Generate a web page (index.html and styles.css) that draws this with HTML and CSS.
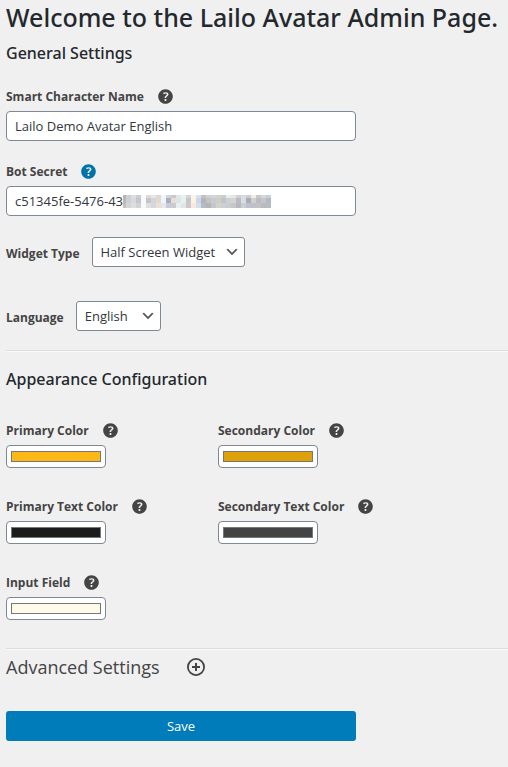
FILE: index.html
```html
<!DOCTYPE html>
<html lang="en">
<head>
<meta charset="utf-8">
<meta name="viewport" content="width=device-width, initial-scale=1">
<title>Lailo Avatar Admin</title>
<link rel="stylesheet" href="styles.css">
</head>
<body>
<svg class="sprite" aria-hidden="true">
  <symbol id="help" viewBox="2.5 2.5 15 15"><path d="M17.3 10c0-4.03-3.27-7.3-7.3-7.3-4.03 0-7.3 3.27-7.3 7.3s3.27 7.3 7.3 7.3c4.03 0 7.3-3.27 7.3-7.3zm-6.6 1.48H9.14v-.43c0-.38.08-.7.24-.98s.46-.57.88-.89c.41-.29.68-.53.81-.71.14-.18.2-.39.2-.62 0-.25-.09-.44-.28-.58-.19-.13-.45-.19-.79-.19-.58 0-1.25.19-2 .57l-.64-1.28c.87-.49 1.8-.74 2.77-.74.81 0 1.45.2 1.92.58.48.39.71.91.71 1.55 0 .43-.09.8-.29 1.11-.19.32-.57.67-1.11 1.06-.38.28-.61.49-.71.63-.1.15-.15.34-.15.57v.35zm-1.47 2.74c-.18-.17-.27-.42-.27-.73 0-.33.08-.58.26-.75s.43-.25.77-.25c.32 0 .57.09.75.26s.27.42.27.74c0 .3-.09.55-.27.72-.18.18-.43.27-.75.27-.33 0-.58-.09-.76-.26z"/></symbol>
  <symbol id="chevron" viewBox="0 0 20 20"><path d="M5 6l5 5 5-5 2 1-7 7-7-7 2-1z" fill="#555"/></symbol>
</svg>
<form class="page">
  <h1>Welcome to the Lailo Avatar Admin Page.</h1>
  <section class="general">
    <h2>General Settings</h2>
    <div class="field">
      <div class="caption"><label for="name">Smart Character Name</label><svg class="help"><use href="#help"/></svg></div>
      <input class="text" id="name" type="text" value="Lailo Demo Avatar English">
    </div>
    <div class="field">
      <div class="caption"><label for="secret">Bot Secret</label><svg class="help active"><use href="#help"/></svg></div>
      <div class="secret">
        <input class="text" id="secret" type="text" value="c51345fe-5476-43">
        <svg class="mask" viewBox="0 0 148 13" shape-rendering="crispEdges" aria-hidden="true"></svg>
      </div>
    </div>
    <div class="choice">
      <label for="widget">Widget Type</label>
      <span class="select widget"><select id="widget"><option>Half Screen Widget</option></select><svg><use href="#chevron"/></svg></span>
    </div>
    <div class="choice">
      <label for="language">Language</label>
      <span class="select language"><select id="language"><option>English</option></select><svg><use href="#chevron"/></svg></span>
    </div>
  </section>
  <hr>
  <section class="appearance">
    <h2>Appearance Configuration</h2>
    <div class="colors">
      <div class="field">
        <div class="caption"><label for="c1">Primary Color</label><svg class="help"><use href="#help"/></svg></div>
        <input id="c1" type="color" value="#fbb917">
      </div>
      <div class="field">
        <div class="caption"><label for="c2">Secondary Color</label><svg class="help"><use href="#help"/></svg></div>
        <input id="c2" type="color" value="#dfa109">
      </div>
      <div class="field">
        <div class="caption"><label for="c3">Primary Text Color</label><svg class="help"><use href="#help"/></svg></div>
        <input id="c3" type="color" value="#1c1c1c">
      </div>
      <div class="field">
        <div class="caption"><label for="c4">Secondary Text Color</label><svg class="help"><use href="#help"/></svg></div>
        <input id="c4" type="color" value="#444444">
      </div>
      <div class="field">
        <div class="caption"><label for="c5">Input Field</label><svg class="help"><use href="#help"/></svg></div>
        <input id="c5" type="color" value="#fffbeb">
      </div>
    </div>
  </section>
  <hr>
  <div class="advanced">
    <span>Advanced Settings</span>
    <button class="expand" type="button" aria-label="Show advanced settings"><svg viewBox="0 0 18 18"><circle cx="9" cy="9" r="8.1" fill="none" stroke="#444" stroke-width="1.8"/><path d="M9 5v8M5 9h8" stroke="#444" stroke-width="2"/></svg></button>
  </div>
  <button class="save" type="button">Save</button>
</form>
<script src="mask.js"></script>
</body>
</html>
```
FILE: mask.js
```js
// Draws the mosaic that hides the end of the bot secret, one 5px cell at a time.
const rows = [
  [0, 3, 'b5b5b9 cfcfcf d9dfe3 cccccd fafafa dcdcd8 e3e8ea e2d8d1 eff7fc ced4de c9c9c9 dfe5e9 edf1f2 d4d5da fdf5e7 d8e3f0 c2c2cc d0d0cd d2d5dc d4d4ca c5cfd3 e9ebed e4e6e8 d1d1d5 d4dde0 cecbcd eeefed c5c9ca d3d7d6 c9cfd5'],
  [3, 5, 'b9b8bb d0d0ce d4dadd c5c6cc f6faff c5c5c6 d2d5da e6d8cd edf4fa aaaebf e9ded6 dce4e8 e7efef c5c7cc fff3df cbd7e8 b4b3bf c4c4bf cacbce cdcec4 bec6ca ccd0d4 d5d5cf bbbbc6 d7dfe2 aaaab9 d0d1cf b9bdc3 c5c7c9 b3bac1'],
  [8, 5, 'c1c1c3 d4d6d6 dbdfe1 d2d2d5 f5f9fb dfe0dd d5d7dc ecdfd6 e0e8f2 c9cbd8 c9cbcc e9eef1 e1e5e6 cacace f6eadd d7e0e8 b9b9c5 b3b5b9 c4c7c8 d2d1cd ccd0cf cccccf c5c5cc b8b8bf c9ced0 bec0cb bfbfc8 c2c2c9 bababf b5bdc5']
];
const mask = document.querySelector('.mask');
for (const [y, height, colors] of rows) {
  colors.split(' ').forEach((color, i) => {
    const cell = document.createElementNS('http://www.w3.org/2000/svg', 'rect');
    const start = Math.max(0, i * 5 - 2);
    cell.setAttribute('x', start);
    cell.setAttribute('y', y);
    cell.setAttribute('width', i * 5 + 3 - start);
    cell.setAttribute('height', height);
    cell.setAttribute('fill', '#' + color);
    mask.append(cell);
  });
}
```
FILE: styles.css
```css
* { box-sizing: border-box; }
body {
  margin: 0;
  background: #f0f0f0;
  color: #444;
  font: 13px/20px "Segoe UI", "Open Sans", "Noto Sans", sans-serif;
}
.sprite { display: none; }
.page { padding: 0 0 24px 6px; }
h1, h2 { margin: 0; color: #23282d; font-family: "Segoe UI", "Noto Sans", "Open Sans", sans-serif; font-weight: 500; }
h1 { font-size: 25px; line-height: 34px; white-space: nowrap; }
h2 { font-size: 16px; line-height: 24px; }
.general h2 { margin: 7px 0 20px; }
hr {
  margin: 0;
  border: 0;
  border-top: 1px solid #ddd;
  border-bottom: 1px solid #fafafa;
}
label { font-size: 12px; font-weight: 700; }
.caption { display: flex; align-items: center; gap: 14px; height: 26px; padding-bottom: 4px; }
.caption label { padding-top: 2px; }
.help { width: 15px; height: 15px; fill: #444; }
.help.active { fill: #0073aa; }
.general .field { max-width: 350px; margin-bottom: 19px; }
.text, select {
  display: block;
  width: 100%;
  height: 30px;
  margin: 0;
  padding: 0 8px;
  border: 1px solid #7e8993;
  border-radius: 4px;
  background: #fff;
  color: #32373c;
  font: inherit;
}
.secret { position: relative; }
.mask { position: absolute; left: 117px; top: 9px; width: 148px; height: 13px; }
.choice { display: flex; align-items: center; gap: 12px; margin-bottom: 34px; }
.general .field + .choice { margin-top: 21px; }
.choice label { padding-top: 4px; }
.select { position: relative; }
.select select { appearance: none; border-radius: 3px; }
.select svg { position: absolute; right: 5px; top: 7px; width: 16px; height: 16px; pointer-events: none; }
.widget { width: 153px; }
.language { width: 85px; }
.general .choice:last-child { margin-bottom: 19px; }
.appearance h2 { margin: 15px 0 28px; }
.colors {
  display: grid;
  grid-template-columns: 212px 1fr;
  row-gap: 27px;
  margin-bottom: 28px;
}
input[type="color"] {
  display: block;
  width: 100px;
  height: 23px;
  margin: 0;
  padding: 1px 2px;
  border: 1px solid #7e8993;
  border-radius: 4px;
  background: #fff;
}
input[type="color"]::-webkit-color-swatch-wrapper { padding: 4px 2px; }
input[type="color"]::-webkit-color-swatch { border: 1px solid #777; border-radius: 0; }
.advanced { display: flex; align-items: center; gap: 27px; height: 34px; font-size: 18px; line-height: 24px; }
.expand { padding: 0; border: 0; background: none; }
.expand svg { display: block; width: 18px; height: 18px; }
.save {
  display: block;
  width: 100%;
  max-width: 350px;
  height: 30px;
  margin-top: 27px;
  padding: 0;
  border: 0;
  border-radius: 3px;
  background: #007cba;
  color: #fff;
  font: inherit;
}
```
